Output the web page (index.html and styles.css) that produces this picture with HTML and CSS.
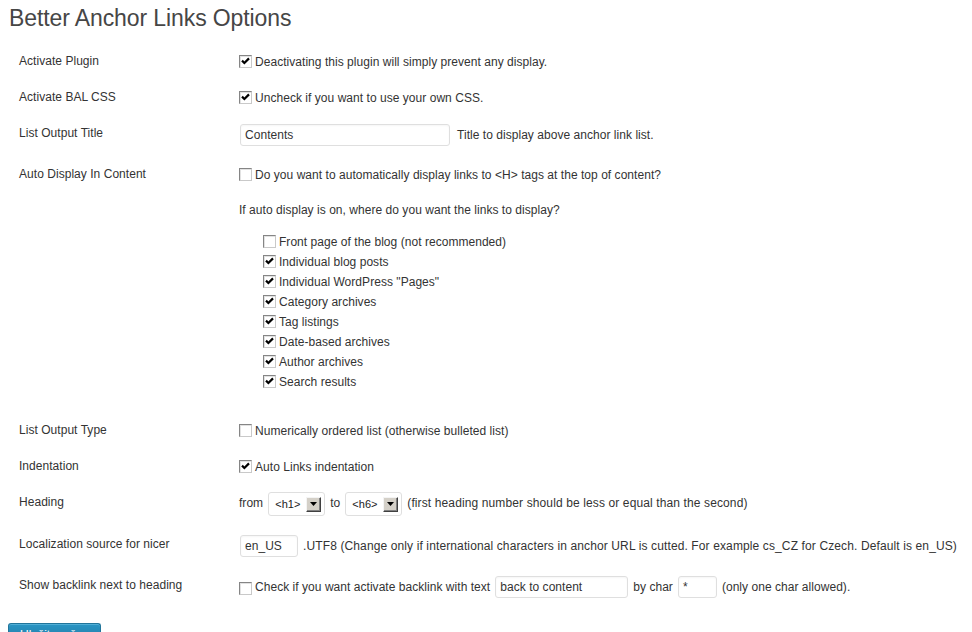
FILE: index.html
```html
<!DOCTYPE html>
<html lang="en">
<head>
<meta charset="utf-8">
<title>Better Anchor Links Options</title>
<link rel="stylesheet" href="styles.css">
</head>
<body>
<div class="wrap">
  <h2 class="page-title">Better Anchor Links Options</h2>
  <form class="options">
    <table class="form-table">
      <tr>
        <th>Activate Plugin</th>
        <td><label class="opt"><span class="cb on"><svg viewBox="0 0 11 11"><path d="M2 4.6 L4.4 7 L9 2.4"/></svg></span>Deactivating this plugin will simply prevent any display.</label></td>
      </tr>
      <tr>
        <th>Activate BAL CSS</th>
        <td><label class="opt"><span class="cb on"><svg viewBox="0 0 11 11"><path d="M2 4.6 L4.4 7 L9 2.4"/></svg></span>Uncheck if you want to use your own CSS.</label></td>
      </tr>
      <tr>
        <th>List Output Title</th>
        <td><div class="line"><span class="field title-field">Contents</span>Title to display above anchor link list.</div></td>
      </tr>
      <tr>
        <th>Auto Display In Content</th>
        <td>
          <label class="opt"><span class="cb"></span>Do you want to automatically display links to &lt;H&gt; tags at the top of content?</label>
          <p class="note">If auto display is on, where do you want the links to display?</p>
          <ul class="sub">
            <li class="opt"><span class="cb"></span>Front page of the blog (not recommended)</li>
            <li class="opt"><span class="cb on"><svg viewBox="0 0 11 11"><path d="M2 4.6 L4.4 7 L9 2.4"/></svg></span>Individual blog posts</li>
            <li class="opt"><span class="cb on"><svg viewBox="0 0 11 11"><path d="M2 4.6 L4.4 7 L9 2.4"/></svg></span>Individual WordPress "Pages"</li>
            <li class="opt"><span class="cb on"><svg viewBox="0 0 11 11"><path d="M2 4.6 L4.4 7 L9 2.4"/></svg></span>Category archives</li>
            <li class="opt"><span class="cb on"><svg viewBox="0 0 11 11"><path d="M2 4.6 L4.4 7 L9 2.4"/></svg></span>Tag listings</li>
            <li class="opt"><span class="cb on"><svg viewBox="0 0 11 11"><path d="M2 4.6 L4.4 7 L9 2.4"/></svg></span>Date-based archives</li>
            <li class="opt"><span class="cb on"><svg viewBox="0 0 11 11"><path d="M2 4.6 L4.4 7 L9 2.4"/></svg></span>Author archives</li>
            <li class="opt"><span class="cb on"><svg viewBox="0 0 11 11"><path d="M2 4.6 L4.4 7 L9 2.4"/></svg></span>Search results</li>
          </ul>
        </td>
      </tr>
      <tr>
        <th>List Output Type</th>
        <td><label class="opt"><span class="cb"></span>Numerically ordered list (otherwise bulleted list)</label></td>
      </tr>
      <tr>
        <th>Indentation</th>
        <td><label class="opt"><span class="cb on"><svg viewBox="0 0 11 11"><path d="M2 4.6 L4.4 7 L9 2.4"/></svg></span>Auto Links indentation</label></td>
      </tr>
      <tr>
        <th>Heading</th>
        <td>
          <div class="line heading">
            <span>from</span>
            <span class="sel"><span class="sel-val">&lt;h1&gt;</span><span class="sel-btn"><svg viewBox="0 0 7 4"><path d="M0 0 H7 L3.5 4 Z"/></svg></span></span>
            <span>to</span>
            <span class="sel"><span class="sel-val">&lt;h6&gt;</span><span class="sel-btn"><svg viewBox="0 0 7 4"><path d="M0 0 H7 L3.5 4 Z"/></svg></span></span>
            <span class="wide-text">(first heading number should be less or equal than the second)</span>
          </div>
        </td>
      </tr>
      <tr>
        <th>Localization source for nicer</th>
        <td><div class="line"><span class="field locale-field">en_US</span><span class="wide-text">.UTF8 (Change only if international characters in anchor URL is cutted. For example cs_CZ for Czech. Default is en_US)</span></div></td>
      </tr>
      <tr>
        <th>Show backlink next to heading</th>
        <td>
          <div class="line">
            <label class="opt"><span class="cb"></span>Check if you want activate backlink with text</label>
            <span class="field back-field">back to content</span>
            <span>by char</span>
            <span class="field char-field">*</span>
            <span>(only one char allowed).</span>
          </div>
        </td>
      </tr>
    </table>
    <p class="submit"><span class="button-primary">Uložit změny</span></p>
  </form>
</div>
</body>
</html>
```
FILE: styles.css
```css
* {
  box-sizing: border-box;
}

body {
  margin: 0;
  background: #fff;
  color: #333;
  font: 12px/1.15 "Liberation Sans", Arial, sans-serif;
  letter-spacing: 0.04px;
}

.wrap {
  padding: 0 0 0 9px;
}

.page-title {
  margin: 0;
  padding: 4px 0 4px;
  font-size: 23px;
  line-height: 29px;
  font-weight: normal;
  color: #464646;
  letter-spacing: -0.1px;
}

.form-table {
  border-collapse: collapse;
  margin-top: 7px;
}

.form-table th {
  box-sizing: content-box;
  width: 200px;
  min-width: 200px;
  padding: 10px;
  text-align: left;
  vertical-align: top;
  font-weight: normal;
  line-height: 14px;
  white-space: nowrap;
}

.form-table td {
  padding: 8px 10px;
  line-height: 20px;
  vertical-align: top;
  white-space: nowrap;
}

.wide-text {
  letter-spacing: 0.12px;
}

.opt {
  display: flex;
  align-items: center;
  height: 20px;
}

.cb {
  flex: none;
  width: 13px;
  height: 13px;
  margin-top: -1px;
  margin-right: 3px;
  border: 1px solid;
  border-color: #858585 #c9c9c9 #c9c9c9 #858585;
  background: #fff;
  box-shadow: inset 1px 1px 0 #e2e2e2;
  display: flex;
  align-items: center;
  justify-content: center;
}

.cb svg {
  width: 11px;
  height: 11px;
  display: block;
}

.cb svg path {
  fill: none;
  stroke: #000;
  stroke-width: 2.2;
}

.note {
  margin: 15px 0 0;
}

.sub {
  list-style: none;
  margin: 12px 0 13px;
  padding: 0 0 0 24px;
}

.line {
  display: flex;
  align-items: center;
  gap: 5px;
  height: 22px;
  margin-bottom: 3px;
}

.line .opt .cb {
  margin-top: 2px;
}

.line.heading {
  align-items: flex-start;
  height: 26px;
  margin-bottom: 0;
}

.field {
  display: inline-block;
  height: 22px;
  line-height: 20px;
  padding: 0 4px;
  border: 1px solid #dfdfdf;
  border-radius: 3px;
  background: #fff;
  color: #333;
  box-shadow: inset 0 1px 2px rgba(0, 0, 0, 0.04);
}

.title-field {
  width: 210px;
  margin-left: 1px;
  margin-right: 2px;
}

.locale-field {
  width: 58px;
  margin-left: 1px;
}

.back-field {
  width: 133px;
}

.char-field {
  width: 39px;
}

.sel {
  display: inline-flex;
  align-items: center;
  justify-content: space-between;
  width: 57px;
  height: 24px;
  margin-top: -1px;
  padding-left: 6px;
  padding-right: 3px;
  border: 1px solid #dfdfdf;
  border-radius: 3px;
  background: #fff;
}

.sel-val {
  font-size: 11px;
  line-height: 14px;
  color: #222;
}

.sel-btn {
  width: 15px;
  height: 15px;
  border: 1px solid;
  border-color: #f4f4f4 #404040 #404040 #f4f4f4;
  background: #d4d0c8;
  box-shadow: inset -1px -1px 0 #808080;
  display: flex;
  align-items: center;
  justify-content: center;
}

.sel-btn svg {
  width: 7px;
  height: 4px;
  display: block;
  fill: #000;
}

.submit {
  margin: 14px 0 0;
  padding: 0;
}

.button-primary {
  display: inline-block;
  height: 24px;
  margin-left: -1px;
  padding: 0 11px 1px;
  line-height: 22px;
  font-size: 12px;
  color: #fff;
  border: 1px solid #21759b;
  border-bottom-color: #1e6a8d;
  border-radius: 3px;
  background: linear-gradient(#2a95c5, #21759b);
  box-shadow: inset 0 1px 0 rgba(120, 200, 230, 0.5);
}
```
